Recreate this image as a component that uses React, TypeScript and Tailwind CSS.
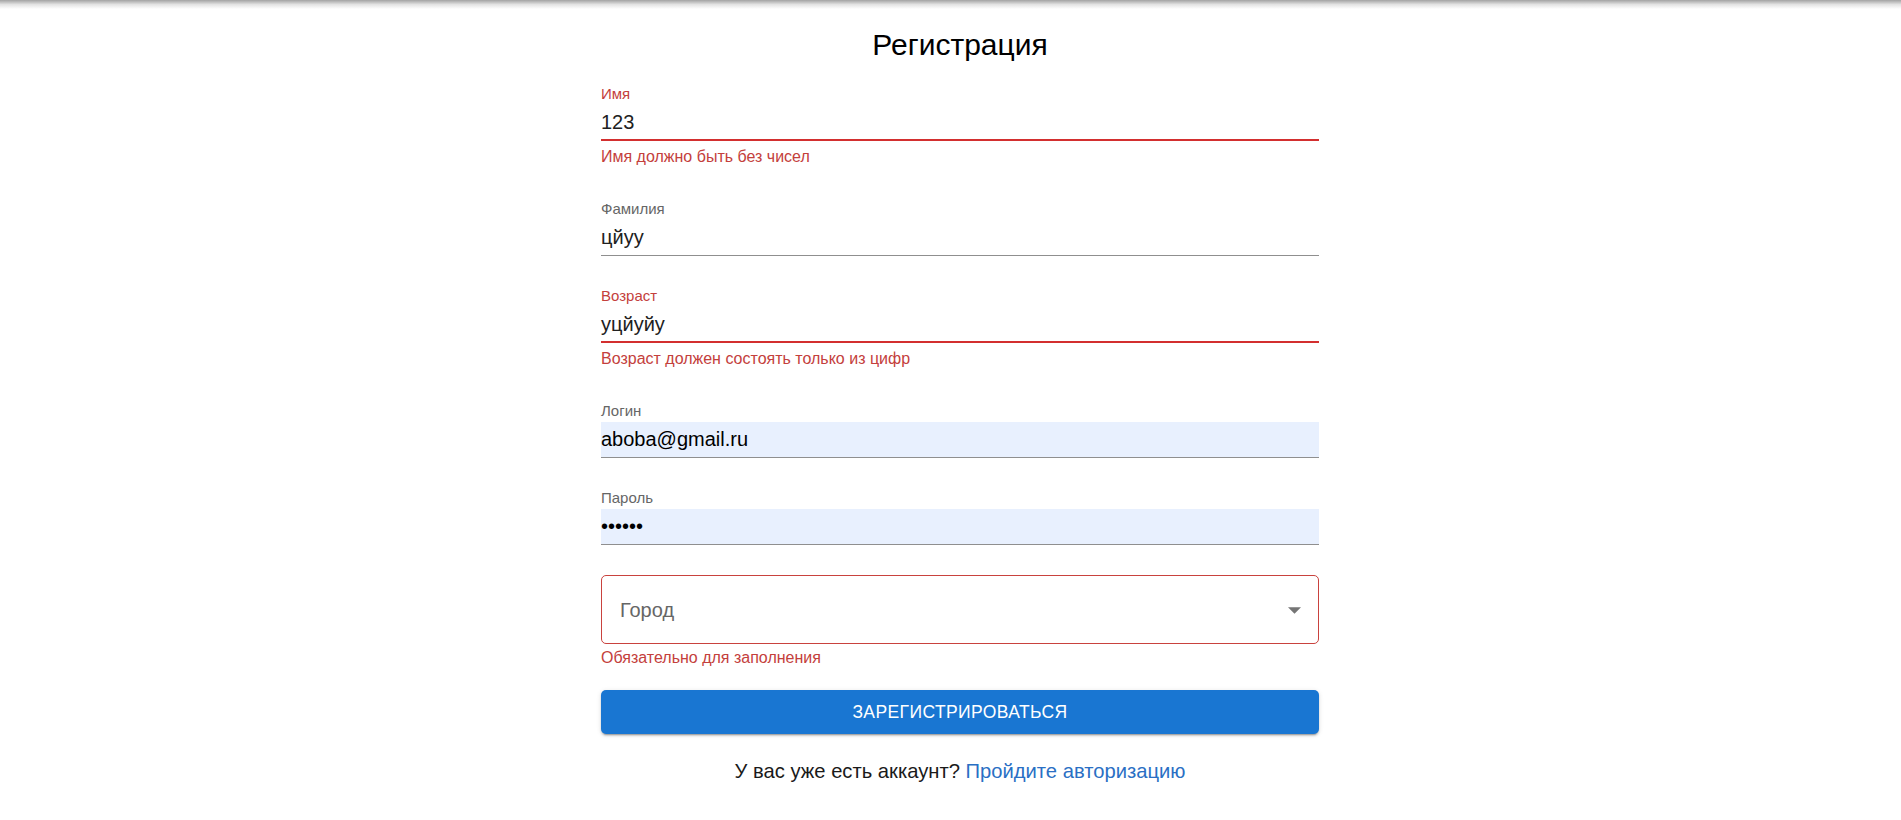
import React from "react";

interface FieldProps {
  label: string;
  value: string;
  error?: string;
  autofill?: boolean;
}

const Field: React.FC<FieldProps> = ({ label, value, error, autofill }) => {
  const hasError = !!error;
  return (
    <div className="flex flex-col">
      <div
        className={`h-[18px] text-[15px] leading-[18px] ${
          hasError ? "text-[#c4403c]" : "text-[#666666]"
        }`}
      >
        {label}
      </div>
      <div
        className={`mt-[2px] h-[36px] box-border flex items-center ${
          hasError
            ? "border-b-2 border-[#d32f2f]"
            : "border-b border-[#8f8f8f]"
        } ${autofill ? "bg-[#e8f0fe] text-black" : "text-[#212121]"}`}
      >
        <span className="text-[20px] leading-[35px]">{value}</span>
      </div>
      {error && (
        <div className="mt-[3px] text-[16px] leading-[25px] text-[#c4403c]">
          {error}
        </div>
      )}
    </div>
  );
};

export default function App() {
  return (
    <div
      className="min-h-screen bg-white"
      style={{ fontFamily: '"Liberation Sans", Arial, sans-serif' }}
    >
      <div className="h-[9px] bg-gradient-to-b from-[#a3a3a3] via-[#e3e3e3] to-white" />

      <div className="flex justify-center pl-[19px]">
        <div className="w-[718px] flex flex-col">
          <h1 className="mt-[18px] text-center text-[30px] leading-[36px] text-black">
            Регистрация
          </h1>

          <div className="mt-[22px] flex flex-col gap-[31px]">
            <Field label="Имя" value="123" error="Имя должно быть без чисел" />
            <Field label="Фамилия" value="цйуу" />
            <Field
              label="Возраст"
              value="уцйуйу"
              error="Возраст должен состоять только из цифр"
            />
            <Field label="Логин" value="aboba@gmail.ru" autofill />
            <Field label="Пароль" value="••••••" autofill />
          </div>

          <div className="mt-[30px] h-[69px] box-border rounded-[5px] border border-[#c9423e] flex items-center justify-between pl-[18px] pr-[17px]">
            <span className="text-[20px] text-[#666666]">Город</span>
            <svg width="13" height="7" viewBox="0 0 10 5" className="mt-px">
              <path d="M0 0l5 5 5-5z" fill="#757575" />
            </svg>
          </div>
          <div className="mt-[4px] text-[16px] leading-[20px] text-[#c4403c]">
            Обязательно для заполнения
          </div>

          <button className="mt-[22px] h-[44px] rounded-[5px] bg-[#1976d2] text-white text-[17.5px] font-medium uppercase tracking-[0.4px] shadow-[0_3px_1px_-2px_rgba(0,0,0,0.2),0_2px_2px_0_rgba(0,0,0,0.14),0_1px_5px_0_rgba(0,0,0,0.12)]">
            Зарегистрироваться
          </button>

          <p className="mt-[25px] text-center text-[20.2px] leading-[24px] text-[#1a1a1a]">
            У вас уже есть аккаунт?{" "}
            <a className="text-[#2a6fc4]" href="#">
              Пройдите авторизацию
            </a>
          </p>
        </div>
      </div>
    </div>
  );
}
